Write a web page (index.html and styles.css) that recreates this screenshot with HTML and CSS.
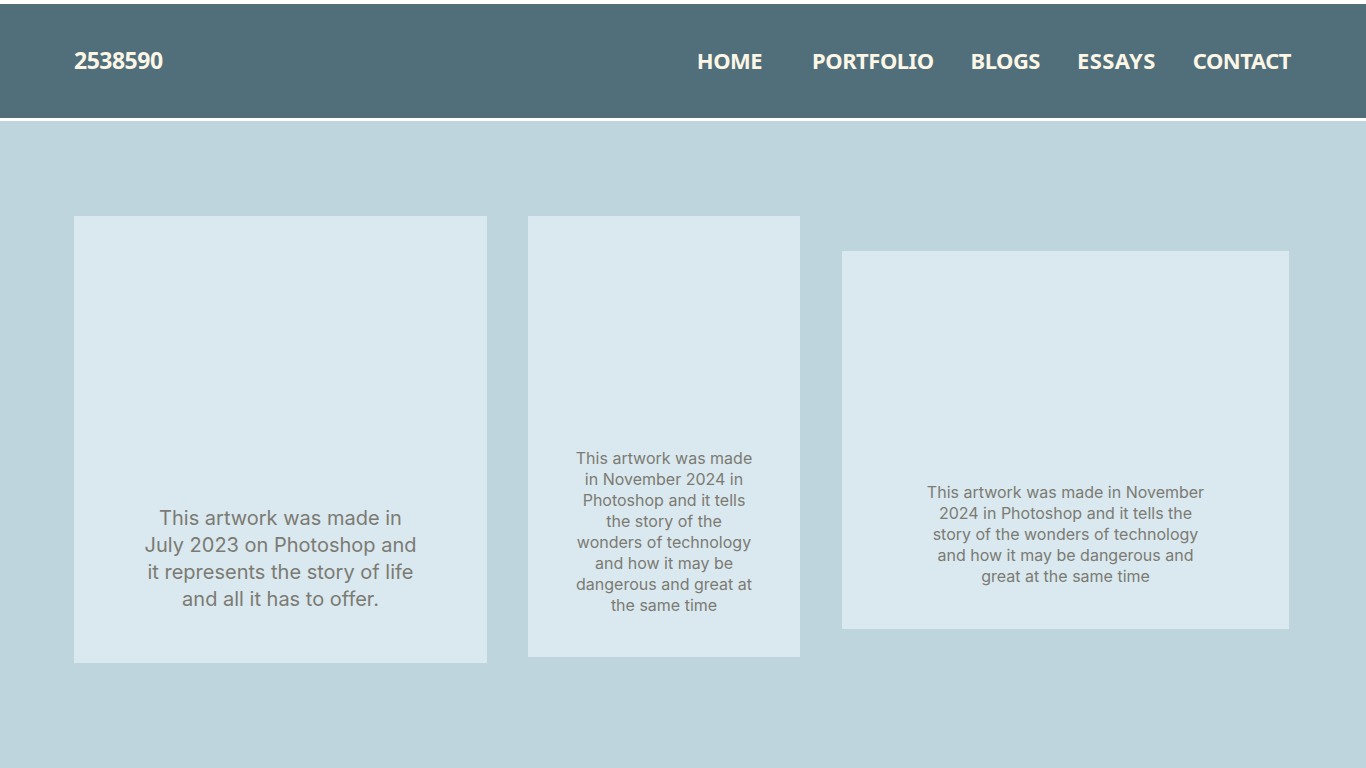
FILE: index.html
```html
<!DOCTYPE html>
<html lang="en">
<head>
<meta charset="utf-8">
<title>2538590 - Portfolio</title>
<link rel="stylesheet" href="styles.css">
</head>
<body>
<header class="site-header">
  <div class="logo">2538590</div>
  <nav class="nav">
    <a class="nav-link nav-home" href="#">HOME</a>
    <a class="nav-link" href="#">PORTFOLIO</a>
    <a class="nav-link" href="#">BLOGS</a>
    <a class="nav-link nav-essays" href="#">ESSAYS</a>
    <a class="nav-link" href="#">CONTACT</a>
  </nav>
</header>
<main class="gallery">
  <div class="card card-one">
    <p class="caption caption-large">This artwork was made in July 2023 on Photoshop and it represents the story of life and all it has to offer.</p>
  </div>
  <div class="card card-two">
    <p class="caption caption-small caption-narrow">This artwork was made in November 2024 in Photoshop and it tells the story of the wonders of technology and how it may be dangerous and great at the same time</p>
  </div>
  <div class="card card-three">
    <p class="caption caption-small caption-wide">This artwork was made in November 2024 in Photoshop and it tells the story of the wonders of technology and how it may be dangerous and great at the same time</p>
  </div>
</main>
</body>
</html>
```
FILE: styles.css
```css
* { box-sizing: border-box; }
html, body { margin: 0; padding: 0; }
body {
  background: #bfd5dd;
  min-height: 768px;
  padding-top: 4px;
  background-image: linear-gradient(#ffffff, #ffffff);
  background-size: 100% 4px;
  background-repeat: no-repeat;
}
.site-header {
  height: 112px;
  background: #516e7b;
  border-bottom: 3px solid #ffffff;
  box-sizing: content-box;
  display: flex;
  align-items: center;
  justify-content: space-between;
  padding: 0 75px 2px 74px;
  font-family: "Noto Sans", "Open Sans", sans-serif;
  font-weight: 700;
  color: #fbf6e6;
}
.logo {
  font-size: 23px;
  letter-spacing: -0.5px;
}
.nav {
  display: flex;
  gap: 37px;
}
.nav-link {
  color: #fbf6e6;
  text-decoration: none;
  font-size: 22px;
  letter-spacing: -0.5px;
}
.nav-home { margin-right: 13px; }
.nav-essays { letter-spacing: 0.4px; }
.gallery {
  display: flex;
  align-items: flex-start;
  padding: 95px 0 0 74px;
  gap: 41px;
}
.card {
  background: #dae8ef;
  display: flex;
  flex-direction: column;
  justify-content: flex-end;
  align-items: center;
}
.card-one { width: 413px; height: 447px; padding-bottom: 50px; }
.card-two { width: 272px; height: 441px; padding-bottom: 41px; }
.card-three { width: 447px; height: 378px; margin-top: 35px; padding-bottom: 42px; margin-left: 1px; }
.caption {
  margin: 0;
  text-align: center;
  font-family: "Inter", "Lato", sans-serif;
  color: #7b7b73;
}
.caption-large {
  font-size: 20px;
  line-height: 27px;
  width: 280px;
}
.caption-small {
  font-size: 16px;
  line-height: 21px;
}
.caption-narrow { width: 184px; }
.caption-wide { width: 290px; }
```
